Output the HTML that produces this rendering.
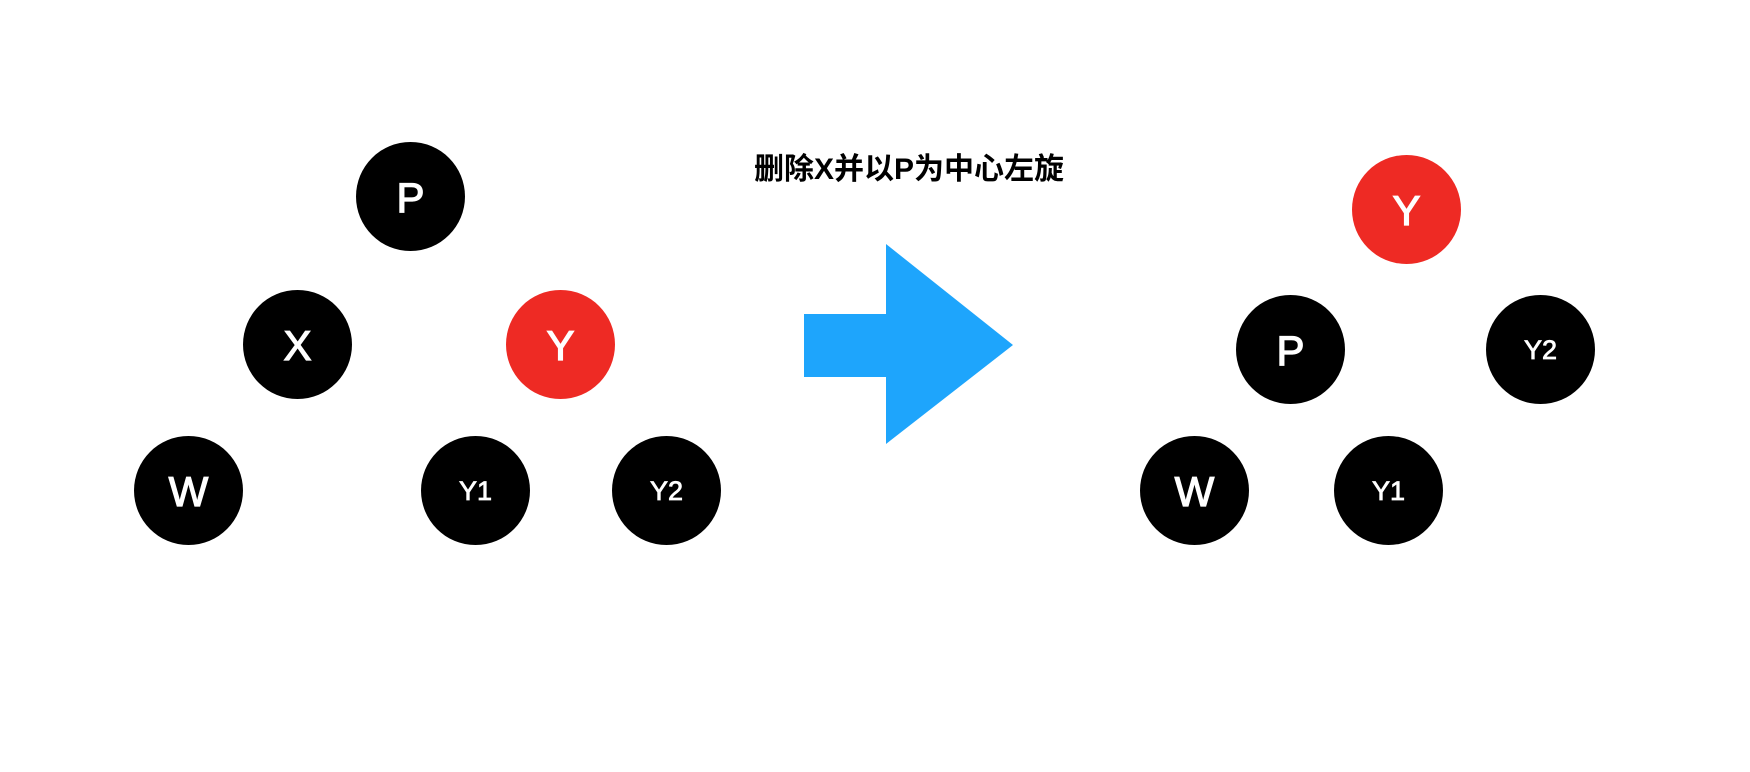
<!DOCTYPE html>
<html><head><meta charset="utf-8"><style>
html,body{margin:0;padding:0;background:#fff;}
body{width:1750px;height:772px;position:relative;overflow:hidden;font-family:"Liberation Sans",Arial,sans-serif;}
.c{position:absolute;width:109px;height:109px;border-radius:50%;background:#000;color:#fff;display:flex;align-items:center;justify-content:center;font-size:42px;line-height:1;padding-top:2px;box-sizing:border-box;-webkit-text-stroke:1.2px #fff;}
.r{background:#EE2A24;}
.s{font-size:27px;-webkit-text-stroke:0.8px #fff;}
.t{position:absolute;left:700px;width:418px;top:153px;text-align:center;font-size:30px;font-weight:bold;font-family:"Liberation Sans","Noto Sans CJK SC",sans-serif;color:#000;line-height:34px;}
</style></head><body>
<div class="c" style="left:356px;top:142px">P</div>
<div class="c" style="left:243px;top:290px">X</div>
<div class="c r" style="left:506px;top:290px">Y</div>
<div class="c" style="left:134px;top:436px">W</div>
<div class="c s" style="left:421px;top:436px">Y1</div>
<div class="c s" style="left:612px;top:436px">Y2</div>
<div class="t">删除X并以P为中心左旋</div>
<svg style="position:absolute;left:0;top:0" width="1750" height="772">
<polygon points="804,314 886,314 886,244 1013,345 886,444 886,377 804,377" fill="#1EA5FC"/>
</svg>
<div class="c r" style="left:1352px;top:155px">Y</div>
<div class="c" style="left:1236px;top:295px">P</div>
<div class="c s" style="left:1486px;top:295px">Y2</div>
<div class="c" style="left:1140px;top:436px">W</div>
<div class="c s" style="left:1334px;top:436px">Y1</div>
</body></html>
